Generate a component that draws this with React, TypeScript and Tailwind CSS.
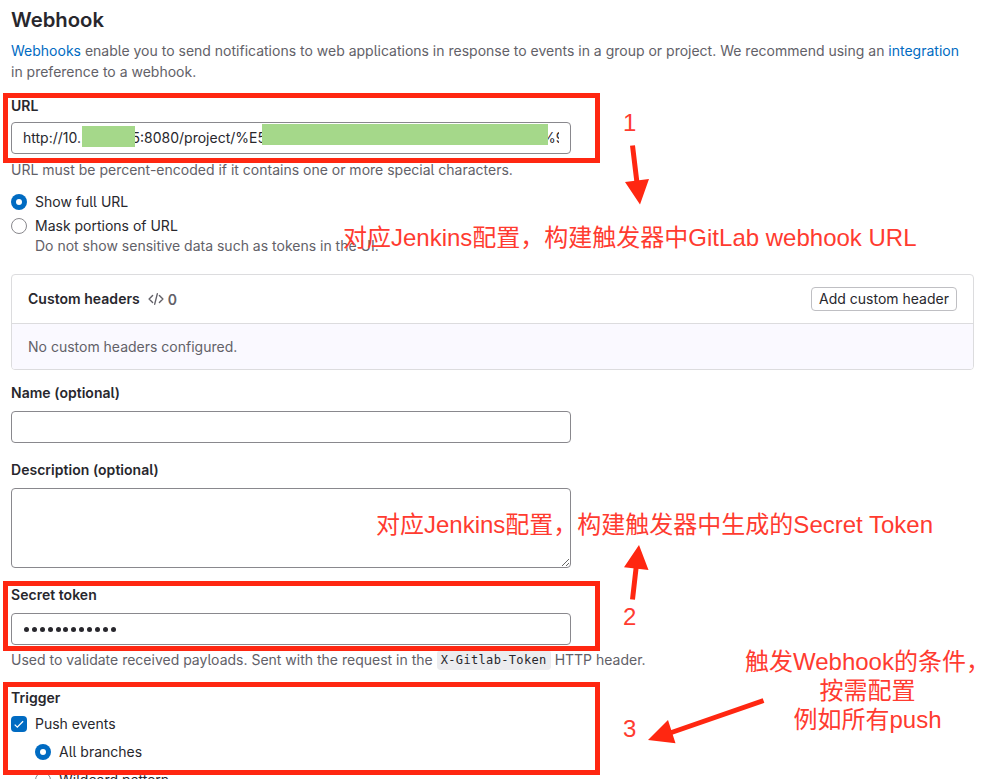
import type { ReactNode } from 'react';

const INK = 'text-[#28272d]';

function Label({ children, className = '' }: { children: ReactNode; className?: string }) {
  return <div className={`text-sm/4 font-semibold tracking-[0.03px] text-[#28272d] ${className}`}>{children}</div>;
}

function Radio({ checked = false }: { checked?: boolean }) {
  return checked ? (
    <span className="flex size-4 shrink-0 items-center justify-center rounded-full bg-[#006bc2]">
      <span className="size-1.5 rounded-full bg-white" />
    </span>
  ) : (
    <span className="size-4 shrink-0 rounded-full border border-[#89888d] bg-white" />
  );
}

function Frame({ className }: { className: string }) {
  return <div className={`absolute left-[3px] w-[597px] border-5 border-[#ff2711] ${className}`} />;
}

function Note({ children, className }: { children: ReactNode; className: string }) {
  return (
    <div
      className={`absolute whitespace-nowrap font-['Liberation_Sans','Noto_Sans_CJK_SC',sans-serif] text-2xl/[29px] text-[#ff3b30] ${className}`}
    >
      {children}
    </div>
  );
}

export default function App() {
  return (
    <main className="relative h-[779px] w-[990px] overflow-hidden bg-white pl-[11px] pr-4 font-['Inter',sans-serif] text-sm text-[#626168] [font-feature-settings:'cv05']">
      <h1 className={`pt-2 text-[20.3px]/6 font-semibold ${INK}`}>Webhook</h1>
      <p className="mt-2 leading-[21px]">
        <a className="text-[#006bc2]">Webhooks</a> enable you to send notifications to web applications in response to
        events in a group or project. We recommend using an <a className="text-[#006bc2]">integration</a>
        <br />
        in preference to a webhook.
      </p>

      <Label className="mt-4">URL</Label>
      <div className="relative mt-2 flex h-8 w-[560px] items-center rounded border border-[#89888d] px-[11px]">
        <div className={`flex w-full justify-between overflow-hidden whitespace-nowrap ${INK}`}>
          <span className="w-[242px]">
            http://10.<span className="inline-block w-[50.5px]" />
            5:8080/project/%E5
          </span>
          <span className="w-[17px] overflow-hidden">%9</span>
        </div>
        <div className="absolute left-[69.5px] top-[3px] h-[21px] w-[53.5px] bg-[#a5d88a]" />
        <div className="absolute left-[249.5px] top-px h-[21px] w-[286.5px] bg-[#a5d88a]" />
      </div>
      <p className="mt-2 leading-4">URL must be percent-encoded if it contains one or more special characters.</p>

      <div className={`mt-4 flex h-4 items-center gap-2 ${INK}`}>
        <Radio checked />
        Show full URL
      </div>
      <div className={`mt-2 flex h-4 items-center gap-2 ${INK}`}>
        <Radio />
        Mask portions of URL
      </div>
      <p className="ml-6 mt-1 leading-4">Do not show sensitive data such as tokens in the UI.</p>

      <section className="mt-5 h-24 overflow-hidden rounded border border-[#dcdcde]">
        <header className="flex h-12 items-center px-4">
          <h2 className={`font-semibold tracking-[0.03px] ${INK}`}>Custom headers</h2>
          <svg className="ml-2 size-4" viewBox="0 0 16 16" fill="none" stroke="currentColor" strokeWidth="1.4">
            <path d="M4.6 4.5 1.1 8l3.5 3.5M11.4 4.5 14.9 8l-3.5 3.5M9.3 2.8 6.7 13.2" strokeLinecap="round" strokeLinejoin="round" />
          </svg>
          <span className="ml-1 mt-0.5 font-semibold">0</span>
          <button className={`ml-auto h-6 w-[146px] whitespace-nowrap rounded border border-[#bfbfc3] text-sm/4 ${INK}`}>
            Add custom header
          </button>
        </header>
        <div className="flex h-[46px] items-center border-t border-[#dcdcde] bg-[#faf9ff] px-4">
          No custom headers configured.
        </div>
      </section>

      <Label className="mt-[15px]">Name (optional)</Label>
      <input className="mt-[10px] block h-8 w-[560px] rounded border border-[#89888d]" />

      <Label className="mt-[19px]">Description (optional)</Label>
      <textarea className="mt-[10px] block h-20 w-[560px] rounded border border-[#89888d]" />

      <Label className="mt-[19px]">Secret token</Label>
      <div className="mt-[10px] flex h-8 w-[560px] items-center gap-[2.9px] rounded border border-[#89888d] px-3">
        {Array.from({ length: 12 }, (_, i) => (
          <span key={i} className="size-[5px] rounded-full bg-[#28272d]" />
        ))}
      </div>
      <p className="mt-[5px] flex h-5 items-center">
        Used to validate received payloads. Sent with the request in the
        <code className="mx-1 rounded bg-[#ececef] px-1 font-['DejaVu_Sans_Mono',monospace] text-[12px]/5 tracking-[0.34px] text-[#28272d]">
          X-Gitlab-Token
        </code>
        HTTP header.
      </p>

      <Label className="mt-5">Trigger</Label>
      <div className={`mt-[10px] flex h-4 items-center gap-2 ${INK}`}>
        <span className="flex size-4 items-center justify-center rounded bg-[#006bc2]">
          <svg className="size-4" viewBox="0 0 16 16" fill="none" stroke="white" strokeWidth="1.3">
            <path d="m3.7 8.6 2.6 2.5 5.8-5.8" />
          </svg>
        </span>
        Push events
      </div>
      <div className={`ml-6 mt-3 flex h-4 items-center gap-2 ${INK}`}>
        <Radio checked />
        All branches
      </div>
      <div className={`ml-6 mt-3 flex h-4 items-center gap-2 ${INK}`}>
        <Radio />
        Wildcard pattern
      </div>

      <Frame className="top-[93px] h-[70px]" />
      <Frame className="top-[581px] h-[70px]" />
      <Frame className="top-[682px] h-[93px]" />

      <Note className="left-[623px] top-[108px]">1</Note>
      <Note className="left-[343px] top-[223px]">对应Jenkins配置，构建触发器中GitLab webhook URL</Note>
      <Note className="left-[376px] top-[510px]">对应Jenkins配置，构建触发器中生成的Secret Token</Note>
      <Note className="left-[623px] top-[602px]">2</Note>
      <Note className="left-[623px] top-[714px]">3</Note>
      <Note className="left-[745px] top-[647px] text-center">
        触发Webhook的条件，
        <br />
        按需配置
        <br />
        例如所有push
      </Note>

      <svg className="absolute left-0 top-0" width="990" height="779" fill="#ff2711" stroke="#ff2711">
        <path d="M632.5 145.5 637 183M632.5 599.5 636.3 566M763.5 700.5 670 733" strokeWidth="5" />
        <path d="M625 182 649 179 640 204.5ZM624 567.3 648.5 570 639 545ZM668 720 675.5 743.3 648 740Z" stroke="none" />
      </svg>
    </main>
  );
}
